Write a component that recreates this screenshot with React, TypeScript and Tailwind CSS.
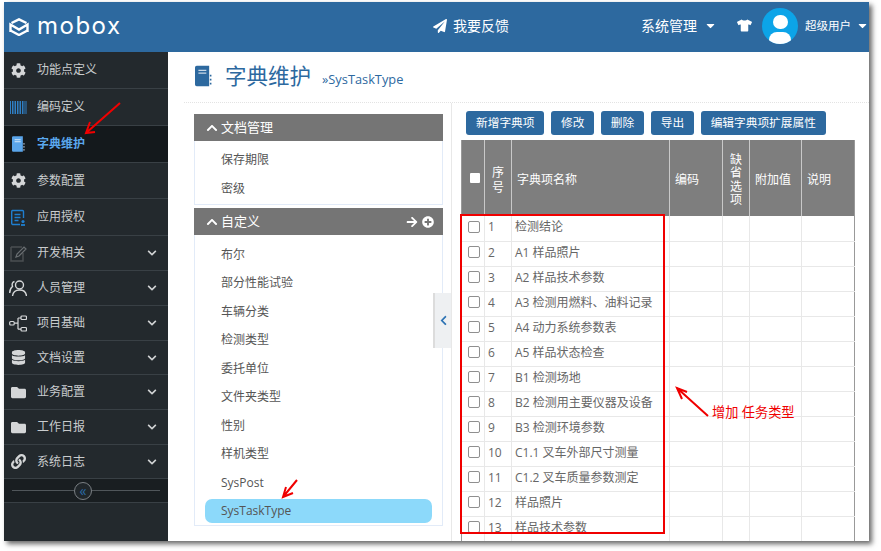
import { FaArrowRight, FaCaretDown, FaChevronDown, FaChevronLeft, FaChevronUp, FaCog, FaDatabase, FaFolder, FaLink, FaPaperPlane, FaPlusCircle, FaTshirt } from "react-icons/fa";
import { ReactNode } from "react";

const font = { fontFamily: '"Open Sans","Noto Sans CJK SC",sans-serif' };

function BookIcon({ className, dots }: { className?: string; dots: string }) {
  return (
    <svg viewBox="0 0 15 18" className={className}>
      <path d="M0 1.500 A1.500 1.500 0 0 1 1.500 0 H12.500 V18 H1.500 A1.500 1.500 0 0 1 0 16.500Z" fill="currentColor" />
      <path d="M3 4H10M3 6.500H10" stroke="#fff" strokeWidth="1.200" opacity="0.75" />
      <path d="M13.800 8v1.500M13.800 11.500v1.500M13.800 15v1.500" stroke={dots} strokeWidth="1.400" />
    </svg>
  );
}

function Barcode() {
  return (
    <svg viewBox="0 0 17 13" className="w-[17px] h-[13px]">
      {[0, 2, 3.500, 5, 7, 8.500, 10, 12, 13.500, 15.500].map((x) => (
        <rect key={x} x={x} y="0" width="1" height="13" fill="#2f7fc4" />
      ))}
    </svg>
  );
}

function AuthIcon() {
  return (
    <svg viewBox="0 0 15 17" fill="none" className="w-[15px] h-[17px]">
      <path d="M9 15.500H1.500A1 1 0 0 1 .7 14.500V2.500A1 1 0 0 1 1.500 1.500H11.500A1 1 0 0 1 12.500 2.500V9" stroke="#1f7fd0" strokeWidth="1.400" />
      <path d="M3.500 5.500H9.500M3.500 8.500H9.500M3.500 11.500H7.500" stroke="#1f7fd0" strokeWidth="1.300" />
      <circle cx="12" cy="12.500" r="1.600" fill="#1f7fd0" />
      <path d="M10 16h4" stroke="#1f7fd0" strokeWidth="1.800" />
    </svg>
  );
}

function EditIcon() {
  return (
    <svg viewBox="0 0 17 17" fill="none" className="w-[17px] h-[17px]">
      <path d="M1 2H12M1 2V16H13V8" stroke="#4b4f52" strokeWidth="1.500" />
      <path d="M6 12L7 9L14 2L16 4L9 11Z" stroke="#6a6f72" strokeWidth="1.200" />
    </svg>
  );
}

function UsersIcon() {
  return (
    <svg viewBox="0 0 18 17" fill="none" stroke="#d6d8d9" strokeWidth="1.400" className="w-[18px] h-[17px]">
      <circle cx="10.500" cy="5" r="4" />
      <path d="M3.500 16C4 12 7 10 10.500 10C14 10 17 12 17.500 16" />
      <path d="M5.500 1.500C3.500 2 2.500 4 3.500 6.500C1.500 8 .7 11 .7 13" />
    </svg>
  );
}

function TreeIcon() {
  return (
    <svg viewBox="0 0 18 17" fill="none" stroke="#d6d8d9" strokeWidth="1.200" className="w-[18px] h-[17px]">
      <rect x=".7" y="6.500" width="4.500" height="3.500" rx="1" />
      <rect x="12" y="1" width="5.500" height="3.500" rx="1" />
      <rect x="12" y="12.500" width="5.500" height="3.500" rx="1" />
      <path d="M5.200 8.200H9M9 3V14.200M9 3H12M9 14.200H12" />
    </svg>
  );
}

function Logo() {
  return (
    <svg viewBox="0 0 20 18" fill="none" stroke="#fff" strokeWidth="2.400" className="w-[20px] h-[18px]">
      <path d="M2.500 5L10 1.300L17.500 5" />
      <path d="M1.500 14V6.500L10 11.500L18.500 6.500V14" />
      <path d="M1.500 12.500L10 17L18.500 12.500" />
    </svg>
  );
}

type MenuItem = { label: string; icon: ReactNode; h: string; more?: boolean; active?: boolean };

const gear = <FaCog className="text-[#d4d6d7] text-[15px]" />;
const folder = <FaFolder className="text-[#d4d6d7] text-[15px]" />;

const menu: MenuItem[] = [
  { label: "功能点定义", icon: gear, h: "h-[37px]" },
  { label: "编码定义", icon: <Barcode />, h: "h-[37px]" },
  { label: "字典维护", icon: <BookIcon className="w-[13px] h-[16px] text-[#5aa5ea]" dots="#cfe3f7" />, h: "h-[37px]", active: true },
  { label: "参数配置", icon: gear, h: "h-[36px]" },
  { label: "应用授权", icon: <AuthIcon />, h: "h-[37px]" },
  { label: "开发相关", icon: <EditIcon />, h: "h-[35px]", more: true },
  { label: "人员管理", icon: <UsersIcon />, h: "h-[35px]", more: true },
  { label: "项目基础", icon: <TreeIcon />, h: "h-[35px]", more: true },
  { label: "文档设置", icon: <FaDatabase className="text-[#d4d6d7] text-[15px]" />, h: "h-[34px]", more: true },
  { label: "业务配置", icon: folder, h: "h-[35px]", more: true },
  { label: "工作日报", icon: folder, h: "h-[35px]", more: true },
  { label: "系统日志", icon: <FaLink className="text-[#d4d6d7] text-[15px]" />, h: "h-[34px]", more: true },
];

const customItems = ["布尔", "部分性能试验", "车辆分类", "检测类型", "委托单位", "文件夹类型", "性别", "样机类型", "SysPost"];

const rows = [
  "检测结论",
  "A1 样品照片",
  "A2 样品技术参数",
  "A3 检测用燃料、油料记录",
  "A4 动力系统参数表",
  "A5 样品状态检查",
  "B1 检测场地",
  "B2 检测用主要仪器及设备",
  "B3 检测环境参数",
  "C1.1 叉车外部尺寸测量",
  "C1.2 叉车质量参数测定",
  "样品照片",
  "样品技术参数",
];

const buttons = ["新增字典项", "修改", "删除", "导出", "编辑字典项扩展属性"];

function PanelHead({ title, actions }: { title: string; actions?: boolean }) {
  return (
    <div className="h-[27px] bg-[#757575] flex items-center pl-[12px] pr-[9px] text-[13px] text-white">
      <FaChevronUp className="text-[12px] mr-[3px]" />
      <span className="flex-1">{title}</span>
      {actions && (
        <span className="flex items-center gap-[4px] text-[12px]">
          <FaArrowRight />
          <FaPlusCircle />
        </span>
      )}
    </div>
  );
}

export default function App() {
  return (
    <div className="w-[881px] h-[551px] bg-white overflow-hidden pl-[4px] pt-[2px]" style={font}>
      <div className="relative w-[865px] h-[539px] flex flex-col bg-white shadow-[3px_3px_5px_rgba(0,0,0,0.6)]">
        {/* Header */}
        <div className="h-[50px] shrink-0 bg-[#2d699f] flex items-center text-white">
          <div className="w-[164px] flex items-center pl-[5px] gap-[8px]">
            <Logo />
            <span className="text-[24px] leading-none tracking-[1.500px] font-['Inter'] font-normal -mt-[3px]">mobox</span>
          </div>
          <div className="flex-1 flex items-center pl-[265px] text-[14px] -mt-[3px]">
            <FaPaperPlane className="text-[14px] mr-[6px]" />
            我要反馈
          </div>
          <div className="flex items-center text-[14px] mr-[20px] -mt-[3px]">
            系统管理
            <FaCaretDown className="text-[13px] ml-[7px]" />
          </div>
          <FaTshirt className="text-[15px] mr-[10px] -mt-[3px]" />
          <div className="w-[36px] h-[36px] rounded-full bg-[#0ca4e8] overflow-hidden flex flex-col items-center pt-[7px] mr-[7px] -mt-[3px]">
            <div className="w-[15px] h-[15px] rounded-full bg-white" />
            <div className="w-[22px] h-[12px] rounded-t-[8px] bg-white mt-[3px]" />
          </div>
          <span className="text-[11.500px] -mt-[3px]">超级用户</span>
          <FaCaretDown className="text-[13px] ml-[5px] -mt-[3px]" />
        </div>

        <div className="flex-1 flex min-h-0">
          {/* Sidebar */}
          <div className="w-[164px] shrink-0 bg-[#23292d] text-[12px] text-[#c9cccd]">
            {menu.map((m) => (
              <div
                key={m.label}
                className={`${m.h} flex items-center border-b border-[#394045] pl-[5px] pr-[11px] ${m.active ? "bg-[#14191c] text-[#5aa8ee] font-bold" : ""}`}
              >
                <span className="w-[18px] flex justify-center mr-[10px]">{m.icon}</span>
                <span className="flex-1">{m.label}</span>
                {m.more && <FaChevronDown className="text-[10px] text-[#d0d2d3]" />}
              </div>
            ))}
            <div className="h-[24px] bg-[#191e21] border-b border-[#394045] flex items-center px-[8px]">
              <div className="w-[62px] h-px bg-[#50565a]" />
              <div className="w-[18px] h-[18px] rounded-full border border-[#7a7f83] bg-[#20262a] flex items-center justify-center text-[#2a6aa5] text-[14px] leading-none">«</div>
              <div className="flex-1 h-px bg-[#50565a]" />
            </div>
          </div>

          {/* Main */}
          <div className="flex-1 min-w-0 flex flex-col pl-[16px]">
            <div className="h-[51px] shrink-0 flex items-center pl-[11px] pb-[2px] border-b border-dotted border-[#e3e3e3]">
              <BookIcon className="w-[17px] h-[22px] text-[#2d699f] mr-[13px]" dots="#2d699f" />
              <span className="text-[21.500px] text-[#2d699f] mr-[11px]">字典维护</span>
              <span className="text-[12.800px] text-[#2d699f] mt-[8px]">»SysTaskType</span>
            </div>

            <div className="flex-1 min-h-0 flex">
              {/* Left panel */}
              <div className="relative w-[268px] shrink-0 pt-[11px] pl-[10px] pr-[8px] border-r border-[#e8e8e8] text-[12px] text-[#555]">
                <PanelHead title="文档管理" />
                <div className="h-[64px] border-x border-b border-[#e2ebf8] pl-[26px] pt-[5px] flex flex-col">
                  <div className="h-[28.500px] flex items-center">保存期限</div>
                  <div className="h-[28.500px] flex items-center">密级</div>
                </div>
                <div className="mt-[3px]">
                  <PanelHead title="自定义" actions />
                </div>
                <div className="h-[291px] border-x border-b border-[#e2ebf8] pt-[5.500px] px-[10px]">
                  {customItems.map((c) => (
                    <div key={c} className="h-[28.500px] flex items-center pl-[16px]">{c}</div>
                  ))}
                  <div className="h-[24px] mt-[1.500px] rounded-[7px] bg-[#8cd9fa] flex items-center pl-[16px]">SysTaskType</div>
                </div>
                <div className="absolute right-0 top-[190px] w-[18px] h-[55px] bg-[#eef0f2] border-l-2 border-[#dcdcdc] flex items-center justify-center text-[#2d73b4] text-[11px]">
                  <FaChevronLeft />
                </div>
              </div>

              {/* Right panel */}
              <div className="flex-1 min-w-0 pl-[9px] pr-[15px] overflow-hidden">
                <div className="flex gap-[6.500px] ml-[5px] mt-[8px] mb-[5px]">
                  {buttons.map((b) => (
                    <div key={b} className="h-[24px] px-[10px] rounded-[3px] bg-[#2d699f] text-white text-[11.700px] flex items-center">{b}</div>
                  ))}
                </div>
                <table className="w-[393px] table-fixed border-collapse text-[12px] text-[#666] border-x border-[#999]">
                  <colgroup>
                    <col className="w-[23px]" />
                    <col className="w-[27px]" />
                    <col className="w-[158px]" />
                    <col className="w-[53px]" />
                    <col className="w-[27px]" />
                    <col className="w-[52px]" />
                    <col className="w-[53px]" />
                  </colgroup>
                  <thead>
                    <tr className="h-[76px] bg-[#7e7e7e] text-white font-normal text-left">
                      <th className="font-normal border-r border-[#c8c8c8] pl-[8px]">
                        <div className="w-[10px] h-[10px] bg-white rounded-[1px]" />
                      </th>
                      <th className="font-normal border-r border-[#c8c8c8] text-center leading-[15px] pt-[3px]">序<br />号</th>
                      <th className="font-normal border-r border-[#c8c8c8] pl-[5px] pt-[3px]">字典项名称</th>
                      <th className="font-normal border-r border-[#c8c8c8] pl-[5px] pt-[3px]">编码</th>
                      <th className="font-normal border-r border-[#c8c8c8] text-center leading-[13.500px] pt-[3px]">缺<br />省<br />选<br />项</th>
                      <th className="font-normal border-r border-[#c8c8c8] pl-[5px] pt-[3px]">附加值</th>
                      <th className="font-normal pl-[5px] pt-[3px]">说明</th>
                    </tr>
                  </thead>
                  <tbody>
                    {rows.map((r, i) => (
                      <tr key={r} className="h-[25px] border-b border-[#e8e8e8]">
                        <td className="border-r border-[#e8e8e8] pl-[6px]">
                          <div className="w-[12px] h-[12px] border border-[#8f8f8f] rounded-[2px] bg-white -mt-[3px]" />
                        </td>
                        <td className="border-r border-[#e8e8e8] pl-[3px] pb-[2px]">{i + 1}</td>
                        <td className="border-r border-[#e8e8e8] pl-[3px] pb-[2px] whitespace-nowrap overflow-hidden">{r}</td>
                        <td className="border-r border-[#e8e8e8]" />
                        <td className="border-r border-[#e8e8e8]" />
                        <td className="border-r border-[#e8e8e8]" />
                        <td />
                      </tr>
                    ))}
                  </tbody>
                </table>
              </div>
            </div>
          </div>
        </div>

        {/* Annotations drawn over the page */}
        <div className="absolute left-[456px] top-[212px] w-[205px] h-[320px] border-2 border-[#f00000]" />
        <span className="absolute left-[708px] top-[401px] text-[13.200px] text-[#f00000]">增加 任务类型</span>
        <svg className="absolute left-0 top-0 w-[865px] h-[539px] pointer-events-none" fill="none" stroke="#f00000" strokeWidth="2">
          <path d="M116 101L82 131M91 130L82 131L86 120" />
          <path d="M293 478L279 495M289 491L279 495L282 485" />
          <path d="M704 414L673 386M683 390L673 386L678 397" />
        </svg>
      </div>
    </div>
  );
}
